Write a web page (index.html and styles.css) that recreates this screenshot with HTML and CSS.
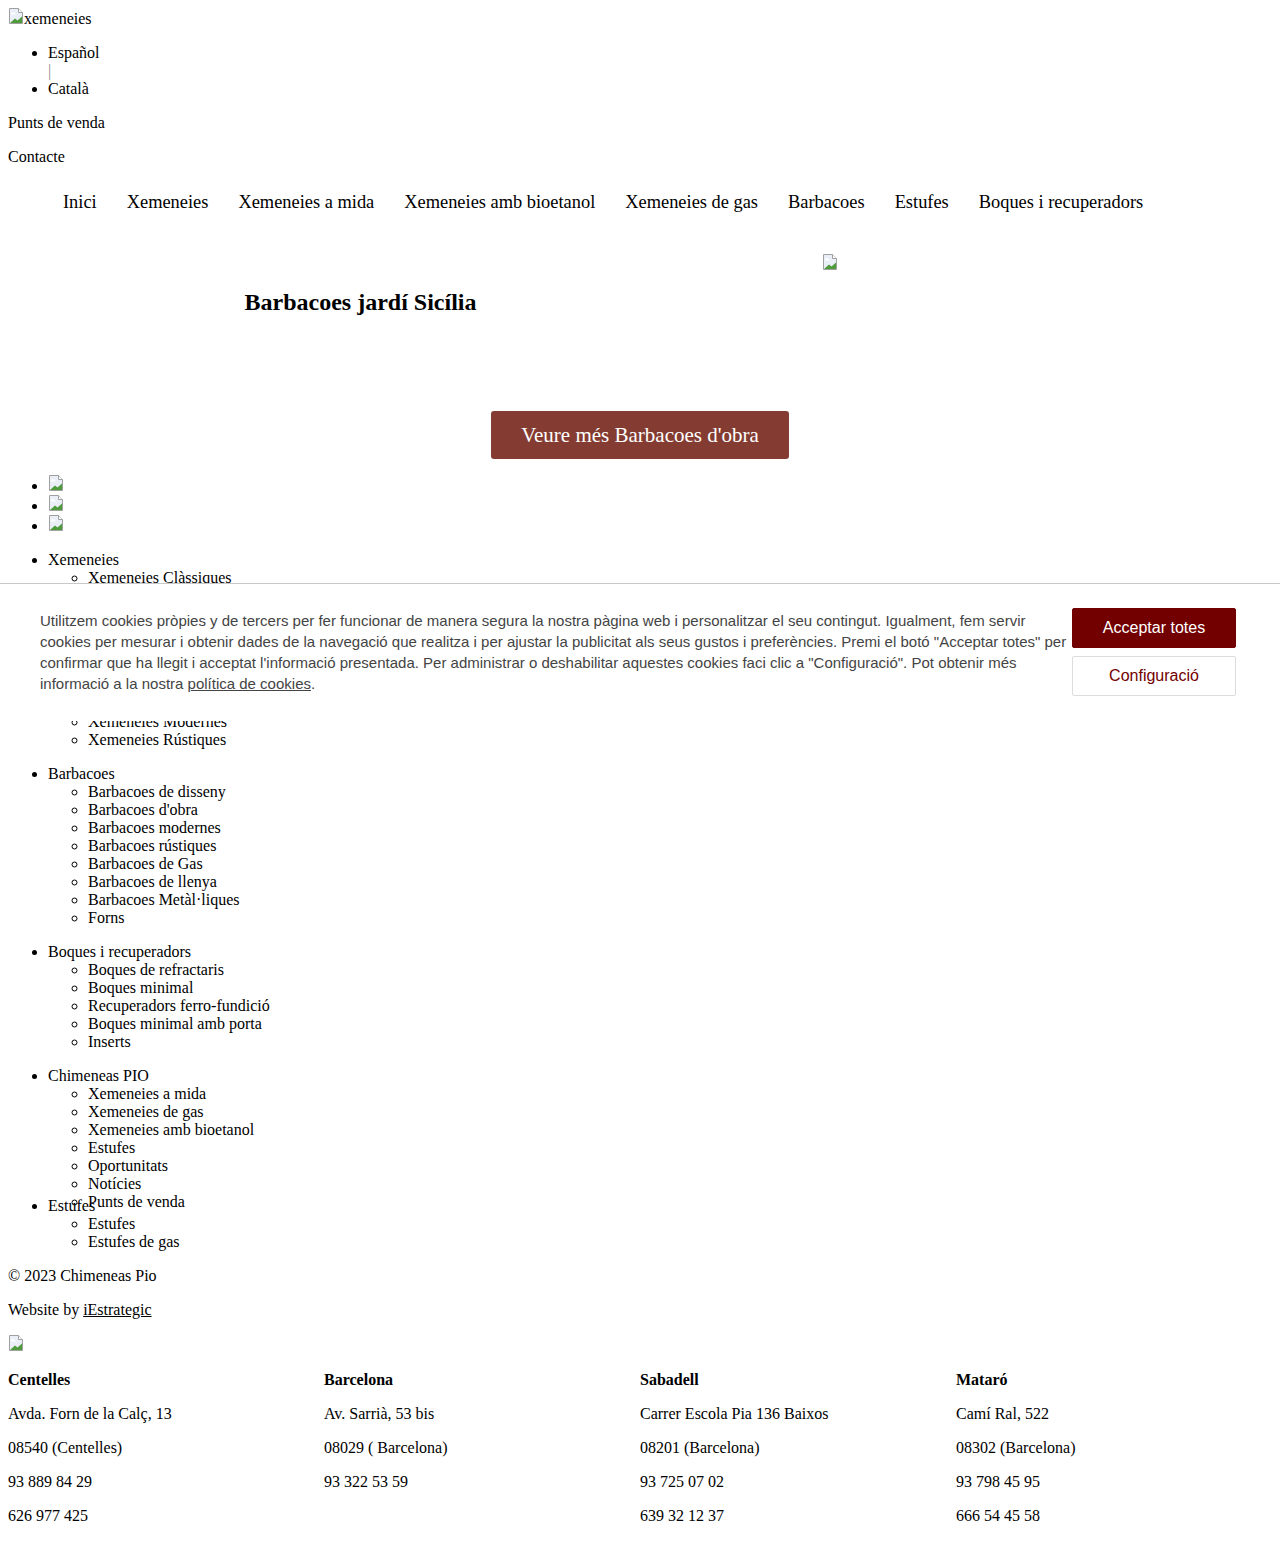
FILE: index.html
```html
<!DOCTYPE html>
<html lang="ca">
<head>
<meta charset="utf-8">
<title>Barbacoes jardí Sicília</title>
<link rel="stylesheet" href="styles.css">
</head>
<body>
<div class="logo"><svg class="broken" width="16" height="16" viewBox="0 0 16 16"><path d="M1.5 0.5H10.5L14.5 4.5V15.5H1.5Z" fill="#e9eef7" stroke="#a0a0a0"/><path d="M10.5 0.5V4.5H14.5" fill="#fff" stroke="#a0a0a0"/><path d="M3 5.5a1.6 1.6 0 0 1 3-.6a1.3 1.3 0 0 1 1.6 1.6H3Z" fill="#fff"/><path d="M2 15L7 10.5L9.5 12.5L14 8.5V15Z" fill="#4f9b3c"/></svg>xemeneies</div>
<ul class="langs">
  <li>Español</li>
  <li class="sep">|</li>
  <li>Català</li>
</ul>
<p>Punts de venda</p>
<p>Contacte</p>

<nav>
  <ul class="menu">
    <li>Inici</li>
    <li>Xemeneies</li>
    <li>Xemeneies a mida</li>
    <li>Xemeneies amb bioetanol</li>
    <li>Xemeneies de gas</li>
    <li>Barbacoes</li>
    <li>Estufes</li>
    <li>Boques i recuperadors</li>
  </ul>
</nav>

<section class="hero">
  <div class="hero-text"><h2>Barbacoes jardí Sicília</h2></div>
  <div class="hero-img"><svg class="broken" width="16" height="16" viewBox="0 0 16 16"><path d="M1.5 0.5H10.5L14.5 4.5V15.5H1.5Z" fill="#e9eef7" stroke="#a0a0a0"/><path d="M10.5 0.5V4.5H14.5" fill="#fff" stroke="#a0a0a0"/><path d="M3 5.5a1.6 1.6 0 0 1 3-.6a1.3 1.3 0 0 1 1.6 1.6H3Z" fill="#fff"/><path d="M2 15L7 10.5L9.5 12.5L14 8.5V15Z" fill="#4f9b3c"/></svg></div>
</section>
<div class="cta"><a class="btn" href="#">Veure més Barbacoes d'obra</a></div>

<ul class="thumbs">
  <li><svg class="broken" width="16" height="16" viewBox="0 0 16 16"><path d="M1.5 0.5H10.5L14.5 4.5V15.5H1.5Z" fill="#e9eef7" stroke="#a0a0a0"/><path d="M10.5 0.5V4.5H14.5" fill="#fff" stroke="#a0a0a0"/><path d="M3 5.5a1.6 1.6 0 0 1 3-.6a1.3 1.3 0 0 1 1.6 1.6H3Z" fill="#fff"/><path d="M2 15L7 10.5L9.5 12.5L14 8.5V15Z" fill="#4f9b3c"/></svg></li>
  <li><svg class="broken" width="16" height="16" viewBox="0 0 16 16"><path d="M1.5 0.5H10.5L14.5 4.5V15.5H1.5Z" fill="#e9eef7" stroke="#a0a0a0"/><path d="M10.5 0.5V4.5H14.5" fill="#fff" stroke="#a0a0a0"/><path d="M3 5.5a1.6 1.6 0 0 1 3-.6a1.3 1.3 0 0 1 1.6 1.6H3Z" fill="#fff"/><path d="M2 15L7 10.5L9.5 12.5L14 8.5V15Z" fill="#4f9b3c"/></svg></li>
  <li><svg class="broken" width="16" height="16" viewBox="0 0 16 16"><path d="M1.5 0.5H10.5L14.5 4.5V15.5H1.5Z" fill="#e9eef7" stroke="#a0a0a0"/><path d="M10.5 0.5V4.5H14.5" fill="#fff" stroke="#a0a0a0"/><path d="M3 5.5a1.6 1.6 0 0 1 3-.6a1.3 1.3 0 0 1 1.6 1.6H3Z" fill="#fff"/><path d="M2 15L7 10.5L9.5 12.5L14 8.5V15Z" fill="#4f9b3c"/></svg></li>
</ul>

<ul>
  <li>Xemeneies
    <ul>
      <li>Xemeneies Clàssiques</li>
      <li>Xemeneies Contemporànies</li>
      <li>Xemeneies de Disseny</li>
      <li>Xemeneies Centrals</li>
      <li>Xemeneies Suspeses</li>
      <li>Xemeneies de Llenya</li>
      <li>Xemeneies Elèctriques</li>
      <li>Xemeneies Minimalistes</li>
      <li>Xemeneies Modernes</li>
      <li>Xemeneies Rústiques</li>
    </ul>
  </li>
</ul>
<ul>
  <li>Barbacoes
    <ul>
      <li>Barbacoes de disseny</li>
      <li>Barbacoes d'obra</li>
      <li>Barbacoes modernes</li>
      <li>Barbacoes rústiques</li>
      <li>Barbacoes de Gas</li>
      <li>Barbacoes de llenya</li>
      <li>Barbacoes Metàl·liques</li>
      <li>Forns</li>
    </ul>
  </li>
</ul>
<ul>
  <li>Boques i recuperadors
    <ul>
      <li>Boques de refractaris</li>
      <li>Boques minimal</li>
      <li>Recuperadors ferro-fundició</li>
      <li>Boques minimal amb porta</li>
      <li>Inserts</li>
    </ul>
  </li>
</ul>
<ul class="pio">
  <li>Chimeneas PIO
    <ul>
      <li>Xemeneies a mida</li>
      <li>Xemeneies de gas</li>
      <li>Xemeneies amb bioetanol</li>
      <li>Estufes</li>
      <li>Oportunitats</li>
      <li>Notícies</li>
      <li>Punts de venda</li>
    </ul>
  </li>
</ul>
<ul>
  <li>Estufes
    <ul>
      <li>Estufes</li>
      <li>Estufes de gas</li>
    </ul>
  </li>
</ul>

<p>© 2023 Chimeneas Pio</p>
<p>Website by <a href="#">iEstrategic</a></p>
<div class="footer-img"><svg class="broken" width="16" height="16" viewBox="0 0 16 16"><path d="M1.5 0.5H10.5L14.5 4.5V15.5H1.5Z" fill="#e9eef7" stroke="#a0a0a0"/><path d="M10.5 0.5V4.5H14.5" fill="#fff" stroke="#a0a0a0"/><path d="M3 5.5a1.6 1.6 0 0 1 3-.6a1.3 1.3 0 0 1 1.6 1.6H3Z" fill="#fff"/><path d="M2 15L7 10.5L9.5 12.5L14 8.5V15Z" fill="#4f9b3c"/></svg></div>

<div class="shops">
  <div>
    <p><strong>Centelles</strong></p>
    <p>Avda. Forn de la Calç, 13</p>
    <p>08540 (Centelles)</p>
    <p>93 889 84 29</p>
    <p>626 977 425</p>
  </div>
  <div>
    <p><strong>Barcelona</strong></p>
    <p>Av. Sarrià, 53 bis</p>
    <p>08029 ( Barcelona)</p>
    <p>93 322 53 59</p>
  </div>
  <div>
    <p><strong>Sabadell</strong></p>
    <p>Carrer Escola Pia 136 Baixos</p>
    <p>08201 (Barcelona)</p>
    <p>93 725 07 02</p>
    <p>639 32 12 37</p>
  </div>
  <div>
    <p><strong>Mataró</strong></p>
    <p>Camí Ral, 522</p>
    <p>08302 (Barcelona)</p>
    <p>93 798 45 95</p>
    <p>666 54 45 58</p>
  </div>
</div>

<div class="cookies">
  <p class="cookies-text">Utilitzem cookies pròpies y de tercers per fer funcionar de manera segura la nostra pàgina web i personalitzar el seu contingut. Igualment, fem servir cookies per mesurar i obtenir dades de la navegació que realitza i per ajustar la publicitat als seus gustos i preferències. Premi el botó "Acceptar totes" per confirmar que ha llegit i acceptat l'informació presentada. Per administrar o deshabilitar aquestes cookies faci clic a "Configuració". Pot obtenir més informació a la nostra <a href="#">política de cookies</a>.</p>
  <div class="cookies-actions">
    <button class="accept">Acceptar totes</button>
    <button class="config">Configuració</button>
  </div>
</div>
</body>
</html>
```

FILE: styles.css
```css
body {
  margin: 8px;
  font-family: "Liberation Serif", "Times New Roman", serif;
  font-size: 16px;
  color: #000;
  background: #fff;
}

a { color: inherit; }

.broken { display: inline-block; }

.langs .sep {
  list-style: none;
  color: #888;
}

.menu {
  display: flex;
  margin: 16px 0 0;
  padding-left: 40px;
  list-style: none;
}
.menu li {
  padding: 10px 15px 12px;
  font-size: 18.4px;
}

.hero {
  display: grid;
  grid-template-columns: 705px 1fr;
  padding-top: 29px;
}
.hero-text { text-align: center; }
.hero-text h2 {
  margin: 34px 0 0;
  font-size: 24px;
  line-height: 28px;
}
.hero-img { padding-left: 109px; }

.cta {
  display: flex;
  justify-content: center;
  margin-top: 95px;
}
.btn {
  display: block;
  height: 48px;
  line-height: 48px;
  padding: 0 30px;
  font-size: 21px;
  color: #fff;
  background: #843c32;
  border-radius: 3px;
  text-decoration: none;
}

.pio { height: 114px; }

.shops {
  display: grid;
  grid-template-columns: repeat(4, 1fr);
}

.cookies {
  position: fixed;
  top: 583px;
  left: 0;
  right: 0;
  display: flex;
  gap: 3px;
  align-items: flex-start;
  padding: 24px 44px 25px 40px;
  background: #fff;
  border-top: 1px solid #c8c8c8;
  font-family: "Liberation Sans", Arial, sans-serif;
}
.cookies-text {
  flex: 1;
  margin: 2px 0 0;
  font-size: 15px;
  line-height: 21px;
  color: #444;
}
.cookies-actions {
  display: flex;
  flex-direction: column;
  gap: 8px;
  width: 164px;
}
.cookies-actions button {
  height: 40px;
  font-family: "Liberation Sans", Arial, sans-serif;
  font-size: 16px;
  border-radius: 2px;
  cursor: pointer;
}
.accept {
  background: #720000;
  color: #fff;
  border: 1px solid #720000;
}
.config {
  background: #fff;
  color: #720000;
  border: 1px solid #dcdcdc;
}
```
